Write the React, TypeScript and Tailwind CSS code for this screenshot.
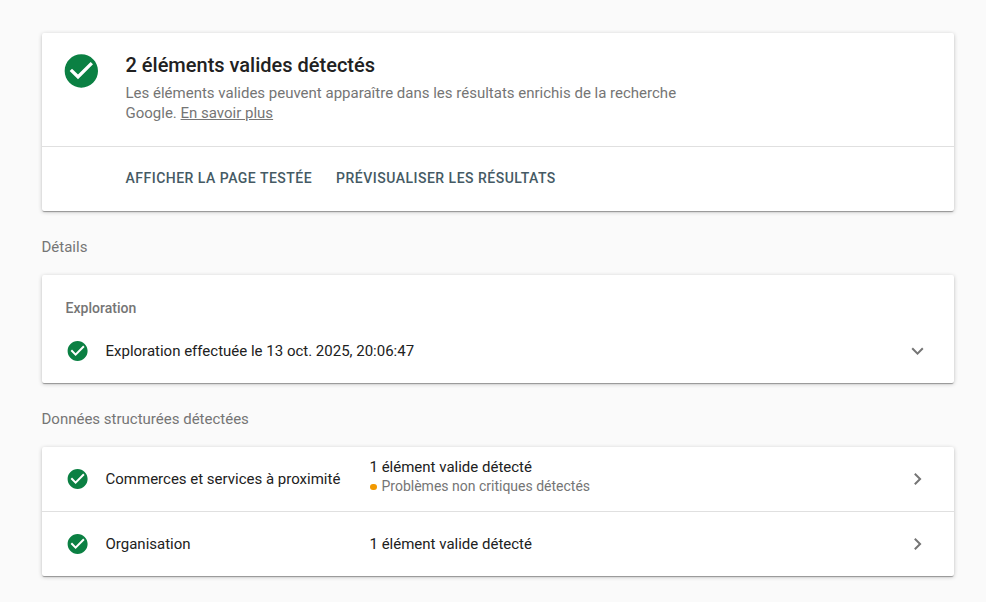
import type { ReactNode } from "react";

function Check({ className }: { className: string }) {
  return (
    <svg viewBox="0.4 0 24 24" className={`shrink-0 fill-[#0b8043] ${className}`} aria-hidden="true">
      <path d="M12 2C6.48 2 2 6.48 2 12s4.48 10 10 10 10-4.48 10-10S17.52 2 12 2zm-2 15l-5-5 1.41-1.41L10 14.17l7.59-7.59L19 8l-9 9z" />
    </svg>
  );
}

function Chevron({ down = false }: { down?: boolean }) {
  return (
    <svg viewBox="0.5 0 24 24" className="size-6 shrink-0 fill-[#757575]" aria-hidden="true">
      <path d={down ? "M16.59 8.59 12 13.17 7.41 8.59 6 10l6 6 6-6z" : "M10 6 8.59 7.41 13.17 12l-4.58 4.59L10 18l6-6z"} />
    </svg>
  );
}

function Card({ children, className = "" }: { children: ReactNode; className?: string }) {
  return (
    <section className={`rounded-[2px] bg-white shadow-[0_2px_1px_-1px_rgba(0,0,0,0.2),0_1px_1px_0_rgba(0,0,0,0.14),0_1px_4px_0_rgba(0,0,0,0.22)] ${className}`}>
      {children}
    </section>
  );
}

function Row({ name, warning }: { name: string; warning?: string }) {
  return (
    <div className="flex h-16 items-center px-6">
      <Check className="size-6" />
      <span className="ml-4 w-[264px] text-[15px] leading-5">{name}</span>
      <div className={`flex-1 text-[15px] leading-5 ${warning ? "pb-[6px]" : ""}`}>
        <div>1 élément valide détecté</div>
        {warning && (
          <div className="flex items-center text-sm leading-[18px] text-[#757575]">
            <span className="mt-[2px] mr-[5px] h-[6px] w-[7px] rounded-full bg-[#f29900]" />
            {warning}
          </div>
        )}
      </div>
      <Chevron />
    </div>
  );
}

export default function App() {
  return (
    <main className="h-[602px] bg-[#fafafa] px-8 pt-[33px] font-[Roboto,sans-serif] text-[#212121]">
      <div className="ml-[9.5px] w-[912.5px]">
        <Card className="h-[178px]">
          <div className="flex h-[114px] border-b border-[#e0e0e0] pt-[18px] pl-5">
            <Check className="size-10" />
            <div className="ml-6 w-[580px]">
              <h1 className="text-xl leading-7 font-medium">2 éléments valides détectés</h1>
              <p className="mt-1 text-[15px] leading-5 text-[#757575]">
                Les éléments valides peuvent apparaître dans les résultats enrichis de la recherche Google.{" "}
                <a className="underline">En savoir plus</a>
              </p>
            </div>
          </div>
          <div className="flex h-16 items-center gap-6 pb-0.5 pl-[84px] text-sm font-medium tracking-[0.49px] text-[#455a64]">
            <button>AFFICHER LA PAGE TESTÉE</button>
            <button>PRÉVISUALISER LES RÉSULTATS</button>
          </div>
        </Card>
        <h2 className="mt-[26px] mb-[18px] text-[15px] leading-5 text-[#757575]">Détails</h2>
        <Card className="h-[108px] px-6 pt-[23px]">
          <h3 className="text-sm leading-5 font-medium tracking-[0.02px] text-[#757575]">Exploration</h3>
          <div className="mt-[21px] flex items-center text-[15px] leading-6">
            <Check className="size-6" />
            <span className="ml-4 flex-1">Exploration effectuée le 13 oct. 2025, 20:06:47</span>
            <Chevron down />
          </div>
        </Card>
        <h2 className="mt-[26px] mb-[18px] text-[15px] leading-5 text-[#757575]">Données structurées détectées</h2>
        <Card>
          <Row name="Commerces et services à proximité" warning="Problèmes non critiques détectés" />
          <div className="border-t border-[#e0e0e0]">
            <Row name="Organisation" />
          </div>
        </Card>
      </div>
    </main>
  );
}
